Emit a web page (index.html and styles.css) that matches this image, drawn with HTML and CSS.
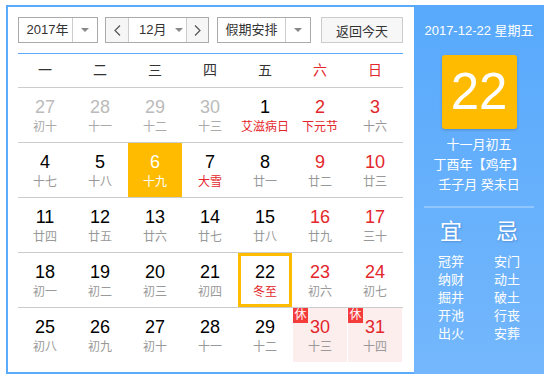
FILE: index.html
```html
<!DOCTYPE html>
<html lang="zh-CN">

<head>
    <meta charset="UTF-8">
    <meta name="viewport" content="width=device-width, initial-scale=1.0">
    <title>万年历</title>
    <link rel="stylesheet" href="styles.css">
</head>

<body>
    <div class="calendar">
        <div class="main">
            <!-- 上方选择栏 -->
            <div class="toolbar">
                <div class="select year">
                    <span class="sel-text">2017年</span>
                    <span class="sel-arrow"><i class="tri"></i></span>
                </div>
                <div class="month-group">
                    <span class="nav-btn">
                        <svg width="7" height="11" viewBox="0 0 7 11"><polyline points="6,0.5 1,5.5 6,10.5" fill="none" stroke="#555" stroke-width="1.2"/></svg>
                    </span>
                    <span class="month-sel">12月<i class="tri"></i></span>
                    <span class="nav-btn">
                        <svg width="7" height="11" viewBox="0 0 7 11"><polyline points="1,0.5 6,5.5 1,10.5" fill="none" stroke="#555" stroke-width="1.2"/></svg>
                    </span>
                </div>
                <div class="select holiday">
                    <span class="sel-text">假期安排</span>
                    <span class="sel-arrow"><i class="tri"></i></span>
                </div>
                <button class="today-btn">返回今天</button>
            </div>

            <div class="week">
                <span>一</span><span>二</span><span>三</span><span>四</span><span>五</span>
                <span class="red">六</span><span class="red">日</span>
            </div>

            <div class="row">
                <div class="cell other"><div class="num">27</div><div class="lunar">初十</div></div>
                <div class="cell other"><div class="num">28</div><div class="lunar">十一</div></div>
                <div class="cell other"><div class="num">29</div><div class="lunar">十二</div></div>
                <div class="cell other"><div class="num">30</div><div class="lunar">十三</div></div>
                <div class="cell"><div class="num">1</div><div class="lunar red">艾滋病日</div></div>
                <div class="cell weekend"><div class="num">2</div><div class="lunar red">下元节</div></div>
                <div class="cell weekend"><div class="num">3</div><div class="lunar">十六</div></div>
            </div>
            <div class="row">
                <div class="cell"><div class="num">4</div><div class="lunar">十七</div></div>
                <div class="cell"><div class="num">5</div><div class="lunar">十八</div></div>
                <div class="cell active"><div class="num">6</div><div class="lunar">十九</div></div>
                <div class="cell"><div class="num">7</div><div class="lunar red">大雪</div></div>
                <div class="cell"><div class="num">8</div><div class="lunar">廿一</div></div>
                <div class="cell weekend"><div class="num">9</div><div class="lunar">廿二</div></div>
                <div class="cell weekend"><div class="num">10</div><div class="lunar">廿三</div></div>
            </div>
            <div class="row">
                <div class="cell"><div class="num">11</div><div class="lunar">廿四</div></div>
                <div class="cell"><div class="num">12</div><div class="lunar">廿五</div></div>
                <div class="cell"><div class="num">13</div><div class="lunar">廿六</div></div>
                <div class="cell"><div class="num">14</div><div class="lunar">廿七</div></div>
                <div class="cell"><div class="num">15</div><div class="lunar">廿八</div></div>
                <div class="cell weekend"><div class="num">16</div><div class="lunar">廿九</div></div>
                <div class="cell weekend"><div class="num">17</div><div class="lunar">三十</div></div>
            </div>
            <div class="row">
                <div class="cell"><div class="num">18</div><div class="lunar">初一</div></div>
                <div class="cell"><div class="num">19</div><div class="lunar">初二</div></div>
                <div class="cell"><div class="num">20</div><div class="lunar">初三</div></div>
                <div class="cell"><div class="num">21</div><div class="lunar">初四</div></div>
                <div class="cell today"><div class="num">22</div><div class="lunar red">冬至</div></div>
                <div class="cell weekend"><div class="num">23</div><div class="lunar">初六</div></div>
                <div class="cell weekend"><div class="num">24</div><div class="lunar">初七</div></div>
            </div>
            <div class="row">
                <div class="cell"><div class="num">25</div><div class="lunar">初八</div></div>
                <div class="cell"><div class="num">26</div><div class="lunar">初九</div></div>
                <div class="cell"><div class="num">27</div><div class="lunar">初十</div></div>
                <div class="cell"><div class="num">28</div><div class="lunar">十一</div></div>
                <div class="cell"><div class="num">29</div><div class="lunar">十二</div></div>
                <div class="cell weekend rest"><span class="badge">休</span><div class="num">30</div><div class="lunar">十三</div></div>
                <div class="cell weekend rest"><span class="badge">休</span><div class="num">31</div><div class="lunar">十四</div></div>
            </div>
        </div>

        <!-- 右侧今日信息 -->
        <div class="side">
            <div class="side-date">2017-12-22 星期五</div>
            <div class="big-day">22</div>
            <div class="side-lunar">
                <div>十一月初五</div>
                <div>丁酉年【鸡年】</div>
                <div>壬子月 癸未日</div>
            </div>
            <div class="side-line"></div>
            <div class="yiji">
                <div class="col">
                    <div class="title">宜</div>
                    <div>冠笄</div>
                    <div>纳财</div>
                    <div>掘井</div>
                    <div>开池</div>
                    <div>出火</div>
                </div>
                <div class="col">
                    <div class="title">忌</div>
                    <div>安门</div>
                    <div>动土</div>
                    <div>破土</div>
                    <div>行丧</div>
                    <div>安葬</div>
                </div>
            </div>
        </div>
    </div>
</body>

</html>
```

FILE: styles.css
```css
body {
    margin: 0;
    font-family: "Liberation Sans", "Noto Sans CJK SC", sans-serif;
    color: #333;
}

.calendar {
    display: flex;
    margin: 5px 0 0 6px;
    width: 538px;
    height: 369px;
}

.main {
    border: 2px solid #5aabfb;
    border-right: none;
    padding: 10px 11px 10px 10px;
    width: 385px;
}

/* 选择栏 */
.toolbar {
    display: flex;
    height: 26px;
    font-size: 13px;
}

.select {
    display: flex;
    box-sizing: border-box;
    height: 26px;
    border: 1px solid #aaa;
    background-color: #fff;
}

.sel-text {
    flex: 1;
    line-height: 24px;
    text-align: center;
}

.sel-arrow {
    display: flex;
    align-items: center;
    justify-content: center;
    width: 24px;
    border-left: 1px solid #ccc;
}

.tri {
    display: inline-block;
    width: 0;
    height: 0;
    border-left: 4px solid transparent;
    border-right: 4px solid transparent;
    border-top: 4px solid #888;
}

.year {
    width: 80px;
    margin-right: 7px;
}

.year .sel-text {
    padding-left: 4px;
}

.month-group {
    display: flex;
    box-sizing: border-box;
    width: 104px;
    height: 26px;
    border: 1px solid #aaa;
    margin-right: 8px;
}

.nav-btn {
    display: flex;
    align-items: center;
    justify-content: center;
    width: 22px;
    background-color: #f6f6f6;
}

.nav-btn:first-child {
    border-right: 1px solid #ccc;
}

.nav-btn:last-child {
    border-left: 1px solid #ccc;
    width: 21px;
}

.month-sel {
    display: flex;
    align-items: center;
    flex: 1;
    line-height: 24px;
    padding-left: 10px;
    gap: 9px;
}

.holiday {
    width: 94px;
    margin-right: 10px;
}

.today-btn {
    box-sizing: border-box;
    width: 82px;
    height: 26px;
    border: 1px solid #ccc;
    background-color: #f7f7f7;
    font-family: inherit;
    font-size: 13px;
    color: #333;
    padding: 0;
}

/* 星期 */
.week {
    display: grid;
    grid-template-columns: repeat(7, 54px);
    column-gap: 1px;
    margin-top: 10px;
    height: 33px;
    line-height: 33px;
    border-top: 1px solid #5aabfb;
    border-bottom: 1px solid #ccc;
    text-align: center;
    font-size: 14px;
}

.red {
    color: #e3262b;
}

/* 日期格子 */
.row {
    display: grid;
    grid-template-columns: repeat(7, 54px);
    column-gap: 1px;
    height: 54px;
    border-bottom: 1px solid #ccc;
}

.row:last-child {
    border-bottom: none;
}

.cell {
    position: relative;
    box-sizing: border-box;
    padding-top: 8px;
    text-align: center;
}

.num {
    font-size: 18px;
    line-height: 22px;
    color: #000;
}

.lunar {
    margin-top: 1px;
    font-size: 12px;
    line-height: 16px;
    color: #999;
}

.lunar.red {
    color: #e3262b;
}

.weekend .num {
    color: #e3262b;
}

.other .num {
    color: #bbb;
}

.other .lunar {
    color: #aaa;
}

.active {
    background-color: #ffbb00;
}

.active .num,
.active .lunar {
    color: #fff;
}

.today {
    border: 3px solid #ffbb00;
    padding-top: 5px;
}

.rest {
    background-color: #fdeeee;
}

.badge {
    position: absolute;
    top: 0;
    left: 0;
    width: 15px;
    height: 15px;
    line-height: 15px;
    font-size: 12px;
    color: #fff;
    background-color: #f43c3c;
    text-align: center;
}

/* 右侧 */
.side {
    width: 130px;
    background: linear-gradient(#58a9fc, #74b7fc);
    color: #fff;
    text-align: center;
    padding-top: 17px;
    box-sizing: border-box;
}

.side-date {
    font-size: 13px;
    line-height: 18px;
}

.big-day {
    width: 75px;
    height: 74px;
    margin: 15px auto 0;
    background-color: #ffbb00;
    border-radius: 3px;
    box-shadow: 0 1px 3px rgba(0, 0, 0, 0.2);
    font-size: 51px;
    line-height: 74px;
}

.side-lunar {
    margin-top: 6px;
    font-size: 13px;
    line-height: 20px;
}

.side-line {
    width: 110px;
    height: 2px;
    margin: 11px auto 0;
    background-color: #8ec6fd;
}

.yiji {
    display: flex;
    justify-content: center;
    margin-top: 11px;
    font-size: 13px;
    line-height: 18px;
}

.col {
    width: 56px;
}

.title {
    font-size: 22px;
    line-height: 26px;
    margin-bottom: 8px;
    text-shadow: 1px 1px 2px rgba(40, 80, 140, 0.35);
}
```
